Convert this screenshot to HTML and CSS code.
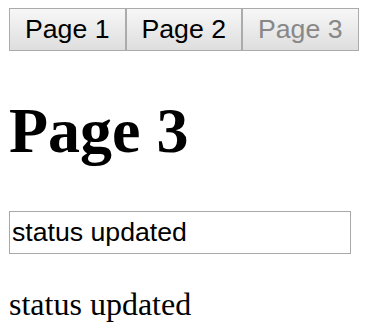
FILE: index.html
```html
<!DOCTYPE html>
<html lang="en">
<head>
    <meta charset="UTF-8">
    <meta name="viewport" content="width=device-width, initial-scale=1.0">
    <title>Page 3</title>
    <link rel="stylesheet" href="styles.css">
</head>
<body>
    <div class="nav">
        <button type="button">Page 1</button>
        <button type="button">Page 2</button>
        <button type="button" disabled>Page 3</button>
    </div>

    <h1>Page 3</h1>

    <input type="text" class="status-input" value="status updated">

    <p class="status-text">status updated</p>
</body>
</html>
```

FILE: styles.css
```css
body {
  font-family: 'Liberation Serif', 'Times New Roman', serif;
  font-size: 32px;
  color: #000;
  background-color: #fff;
  margin: 8px 8px 8px 9px;
}

.nav {
  display: flex;
}

.nav button {
  font-family: 'Liberation Sans', Arial, sans-serif;
  font-size: 26.67px;
  line-height: normal;
  color: #000;
  height: 43px;
  padding: 0 15px;
  margin: 0;
  border: 1px solid #ababab;
  border-radius: 0;
  background: linear-gradient(#f7f7f7, #dedede);
}

.nav button:disabled {
  color: #888;
}

h1 {
  font-size: 64px;
  font-weight: 700;
  margin: 43px 0;
}

.status-input {
  display: block;
  box-sizing: border-box;
  width: 342px;
  height: 43px;
  padding: 0 2px;
  margin: 0;
  font-family: 'Liberation Sans', Arial, sans-serif;
  font-size: 26.67px;
  color: #000;
  border: 1px solid #a9a9a9;
  border-radius: 0;
}

.status-text {
  margin: 32px 0;
}
```
